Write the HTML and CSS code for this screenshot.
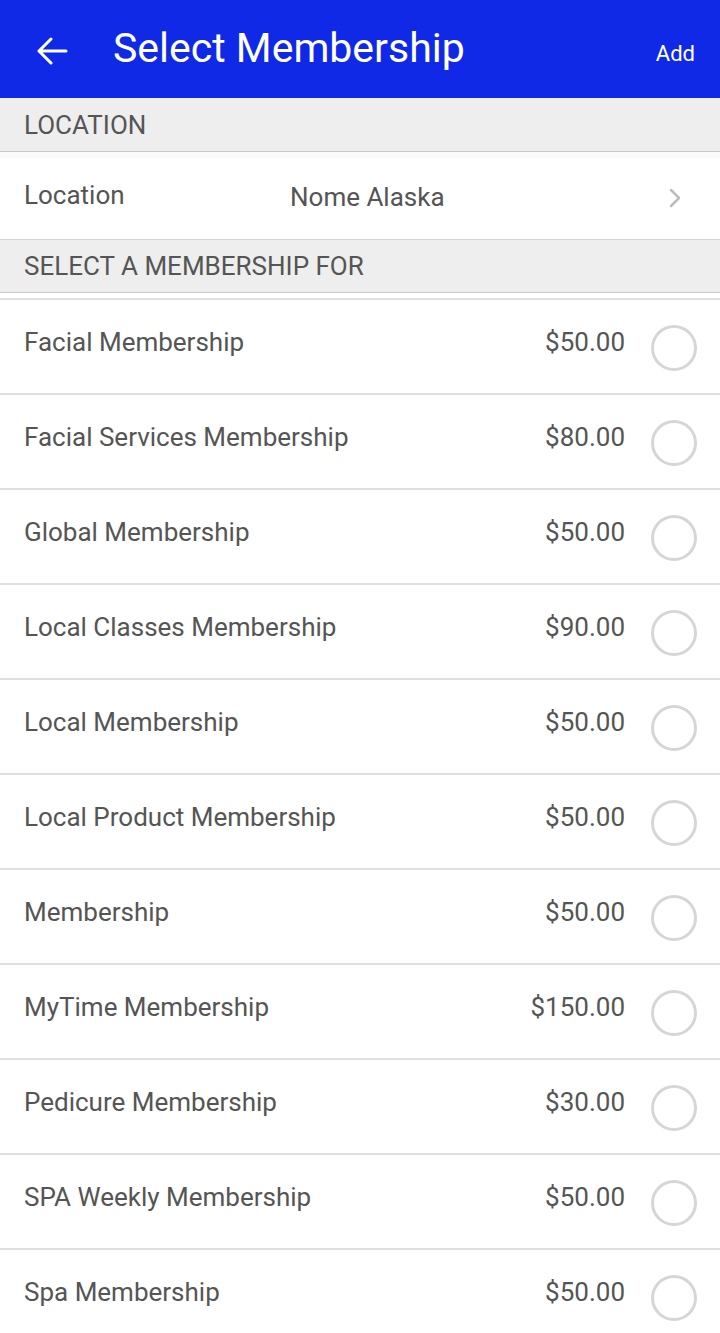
FILE: index.html
```html
<!DOCTYPE html>
<html lang="en">
<head>
    <meta charset="UTF-8">
    <meta name="viewport" content="width=device-width, initial-scale=1.0">
    <title>Select Membership</title>
    <link rel="stylesheet" href="styles.css">
</head>
<body>
    <header class="app-bar">
        <span class="back-btn">
            <svg width="32" height="28" viewBox="0 0 32 28">
                <path d="M30 14H3M15 2L3 14l12 12" fill="none" stroke="#fff" stroke-width="3" stroke-linecap="round" stroke-linejoin="round"/>
            </svg>
        </span>
        <h1 class="app-title">Select Membership</h1>
        <span class="add-btn">Add</span>
    </header>

    <!-- Lokasi -->
    <div class="section-title">LOCATION</div>
    <div class="location-row">
        <span class="location-label">Location</span>
        <span class="location-value">Nome Alaska</span>
        <svg class="chevron" width="14" height="20" viewBox="0 0 14 20">
            <path d="M3 2l8 8-8 8" fill="none" stroke="#bdbdbd" stroke-width="2.5" stroke-linecap="round" stroke-linejoin="round"/>
        </svg>
    </div>

    <!-- Senarai keahlian -->
    <div class="section-title with-top">SELECT A MEMBERSHIP FOR</div>
    <ul class="membership-list">
        <li class="membership-item"><span class="name">Facial Membership</span><span class="price">$50.00</span><span class="radio"></span></li>
        <li class="membership-item"><span class="name">Facial Services Membership</span><span class="price">$80.00</span><span class="radio"></span></li>
        <li class="membership-item"><span class="name">Global Membership</span><span class="price">$50.00</span><span class="radio"></span></li>
        <li class="membership-item"><span class="name">Local Classes Membership</span><span class="price">$90.00</span><span class="radio"></span></li>
        <li class="membership-item"><span class="name">Local Membership</span><span class="price">$50.00</span><span class="radio"></span></li>
        <li class="membership-item"><span class="name">Local Product Membership</span><span class="price">$50.00</span><span class="radio"></span></li>
        <li class="membership-item"><span class="name">Membership</span><span class="price">$50.00</span><span class="radio"></span></li>
        <li class="membership-item"><span class="name">MyTime Membership</span><span class="price">$150.00</span><span class="radio"></span></li>
        <li class="membership-item"><span class="name">Pedicure Membership</span><span class="price">$30.00</span><span class="radio"></span></li>
        <li class="membership-item"><span class="name">SPA Weekly Membership</span><span class="price">$50.00</span><span class="radio"></span></li>
        <li class="membership-item"><span class="name">Spa Membership</span><span class="price">$50.00</span><span class="radio"></span></li>
    </ul>
</body>
</html>
```

FILE: styles.css
```css
body {
    font-family: Roboto, "Noto Sans", Arial, sans-serif;
    margin: 0;
    padding: 0;
    background-color: #ffffff;
    color: #555555;
    overflow: hidden;
}

.app-bar {
    height: 98px;
    background-color: #1029e6;
    display: flex;
    align-items: center;
    color: #ffffff;
    padding: 0 24px 0 36px;
}

.back-btn {
    display: flex;
    width: 77px;
    margin-top: 4px;
}

.app-title {
    margin: 0;
    font-size: 41px;
    font-weight: normal;
    flex: 1;
    margin-top: -3px;
}

.add-btn {
    font-size: 22px;
    margin-top: 8px;
    margin-right: 1px;
}

.section-title {
    height: 54px;
    box-sizing: border-box;
    padding: 0 24px;
    background-color: #eeeeee;
    border-bottom: 1px solid #c9c9c9;
    display: flex;
    align-items: center;
    font-size: 26px;
    color: #555555;
}

.section-title.with-top {
    border-top: 1px solid #d4d4d4;
}

.location-row {
    height: 87px;
    box-sizing: border-box;
    display: flex;
    align-items: center;
    padding: 0 38px 0 24px;
    font-size: 26px;
    border-top: 6px solid #fafafa;
}

.location-label {
    width: 266px;
    padding-bottom: 8px;
}

.location-value {
    flex: 1;
    padding-bottom: 4px;
}

.chevron {
    margin-bottom: 2px;
}

.membership-list {
    list-style: none;
    margin: 0;
    padding: 0;
    margin-top: 5px;
    border-top: 2px solid #e0e0e0;
}

.membership-item {
    height: 95px;
    box-sizing: border-box;
    border-bottom: 2px solid #e0e0e0;
    display: flex;
    align-items: center;
    padding: 0 23px 0 24px;
    font-size: 26px;
}

.membership-item .name {
    flex: 1;
    padding-bottom: 10px;
}

.membership-item .price {
    padding-bottom: 10px;
    margin-right: 26px;
}

.radio {
    width: 46px;
    height: 46px;
    box-sizing: border-box;
    border: 3px solid #d6d6d6;
    border-radius: 50%;
    margin-top: 2px;
}
```
